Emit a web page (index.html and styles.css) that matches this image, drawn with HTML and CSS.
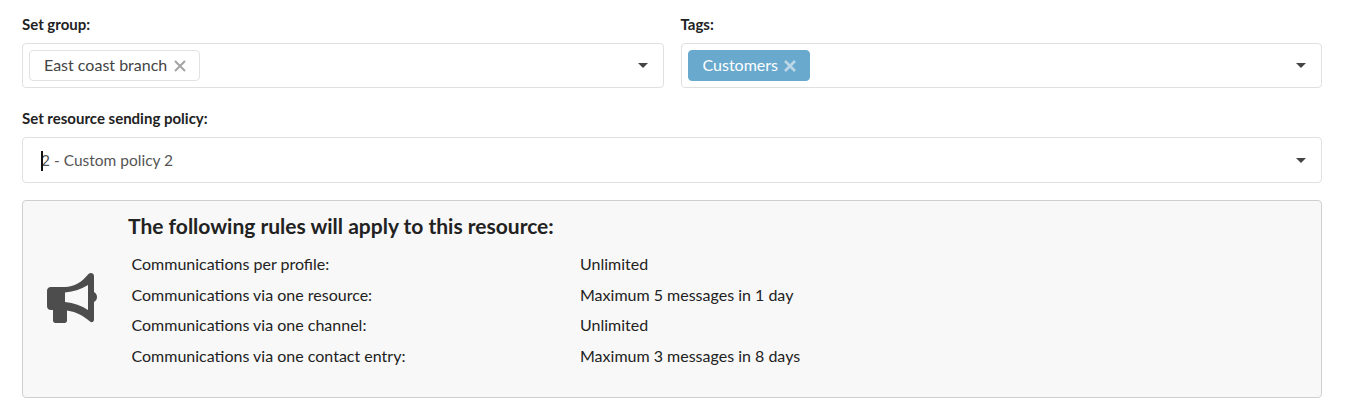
FILE: index.html
```html
<!DOCTYPE html>
<html lang="en">
<head>
<meta charset="utf-8">
<title>Resource settings</title>
<link rel="stylesheet" href="styles.css">
</head>
<body>
<div class="row">
  <div class="field">
    <div class="label">Set group:</div>
    <div class="select">
      <span class="chip">East coast branch <svg class="x" width="12" height="12" viewBox="0 0 12 12" aria-hidden="true"><path d="M1 1l10 10M11 1L1 11"/></svg></span>
      <span class="caret"></span>
    </div>
  </div>
  <div class="field">
    <div class="label">Tags:</div>
    <div class="select">
      <span class="chip chip-blue">Customers <svg class="x" width="12" height="12" viewBox="0 0 12 12" aria-hidden="true"><path d="M1 1l10 10M11 1L1 11"/></svg></span>
      <span class="caret"></span>
    </div>
  </div>
</div>
<div class="field field-wide">
  <div class="label">Set resource sending policy:</div>
  <div class="select select-tall">
    <span class="value"><span class="cursor"></span>2 - Custom policy 2</span>
    <span class="caret"></span>
  </div>
</div>
<div class="panel">
  <div class="panel-icon">
    <svg width="50" height="50" viewBox="0 0 50 50" aria-hidden="true">
      <path fill="#4d4d4d" fill-rule="evenodd" d="M43 .2C45 -.2 47 1 47 3V19c2 1 3 3 3 5s-1 4-3 5V46.500c0 2.500-2.500 3.500-4 2-6.500-5.500-13-9.500-23-11V47.500c0 1.500-1 2.500-2.500 2.500H8.500C7 50 6 49 6 47.500V37H4c-2.500 0-4-1.500-4-4V18c0-2.500 1.500-4 4-4H18c9 0 17-5 23.500-13 .4-.4 1-.7 1.500-.8zM41 12c-6.500 4-14 6.500-23 7.500V29c9 1 16.500 3.500 23 8z"/>
    </svg>
  </div>
  <div class="panel-body">
    <h2 class="panel-title">The following rules will apply to this resource:</h2>
    <dl class="rules">
      <dt>Communications per profile:</dt><dd>Unlimited</dd>
      <dt>Communications via one resource:</dt><dd>Maximum 5 messages in 1 day</dd>
      <dt>Communications via one channel:</dt><dd>Unlimited</dd>
      <dt>Communications via one contact entry:</dt><dd>Maximum 3 messages in 8 days</dd>
    </dl>
  </div>
</div>
</body>
</html>
```
FILE: styles.css
```css
* { box-sizing: border-box; }
html, body { margin: 0; background: #fff; }
body {
  padding: 14px 24px 0 22px;
  font-family: "Lato", "Liberation Sans", sans-serif;
  font-size: 16px;
  color: #333;
}
.row { display: flex; gap: 17px; }
.field { flex: 1 1 0; min-width: 0; }
.field-wide { margin-top: 20px; }
.label {
  height: 20px;
  margin-bottom: 9px;
  font-size: 15px;
  line-height: 20px;
  font-weight: 700;
  color: #222;
}
.select {
  display: flex;
  align-items: center;
  justify-content: space-between;
  height: 45px;
  padding: 0 15px 0 6px;
  background: #fff;
  border: 1px solid #e0e0e0;
  border-radius: 4px;
}
.select-tall { height: 46px; padding-left: 18px; }
.chip {
  display: inline-flex;
  align-items: center;
  gap: 7px;
  height: 31px;
  padding: 0 13px 2px 14px;
  border: 1px solid #e2e2e2;
  border-radius: 4px;
  color: #444;
  line-height: 28px;
  white-space: nowrap;
}
.chip .x { position: relative; top: 1px; }
.chip-blue {
  gap: 6px;
  background: #68a9cd;
  border-color: #68a9cd;
  color: #fff;
}
.x { fill: none; stroke: #a4a4a4; stroke-width: 2; }
.chip-blue .x { stroke: #bcd8e8; stroke-width: 2.6; }
.caret {
  width: 0;
  height: 0;
  border-left: 5px solid transparent;
  border-right: 5px solid transparent;
  border-top: 5px solid #444;
}
.value {
  position: relative;
  font-size: 15.5px;
  color: #555;
}
.cursor {
  position: absolute;
  left: 0;
  top: 0;
  width: 2px;
  height: 20px;
  background: #111;
}
.panel {
  display: flex;
  height: 198px;
  margin-top: 17px;
  background: #f8f8f8;
  border: 1px solid #cfcfcf;
  border-radius: 4px;
}
.panel-icon {
  flex: 0 0 105px;
  display: flex;
  align-items: center;
  padding: 0 0 2px 24px;
}
.panel-title {
  margin: 12px 0 9.300px;
  font-size: 21px;
  line-height: 26px;
  font-weight: 700;
  color: #222;
}
.rules {
  display: grid;
  grid-template-columns: 448.500px 1fr;
  grid-auto-rows: 30.6px;
  align-items: center;
  margin: 0 0 0 3.500px;
  color: #222;
}
.rules dt, .rules dd { margin: 0; }
```
